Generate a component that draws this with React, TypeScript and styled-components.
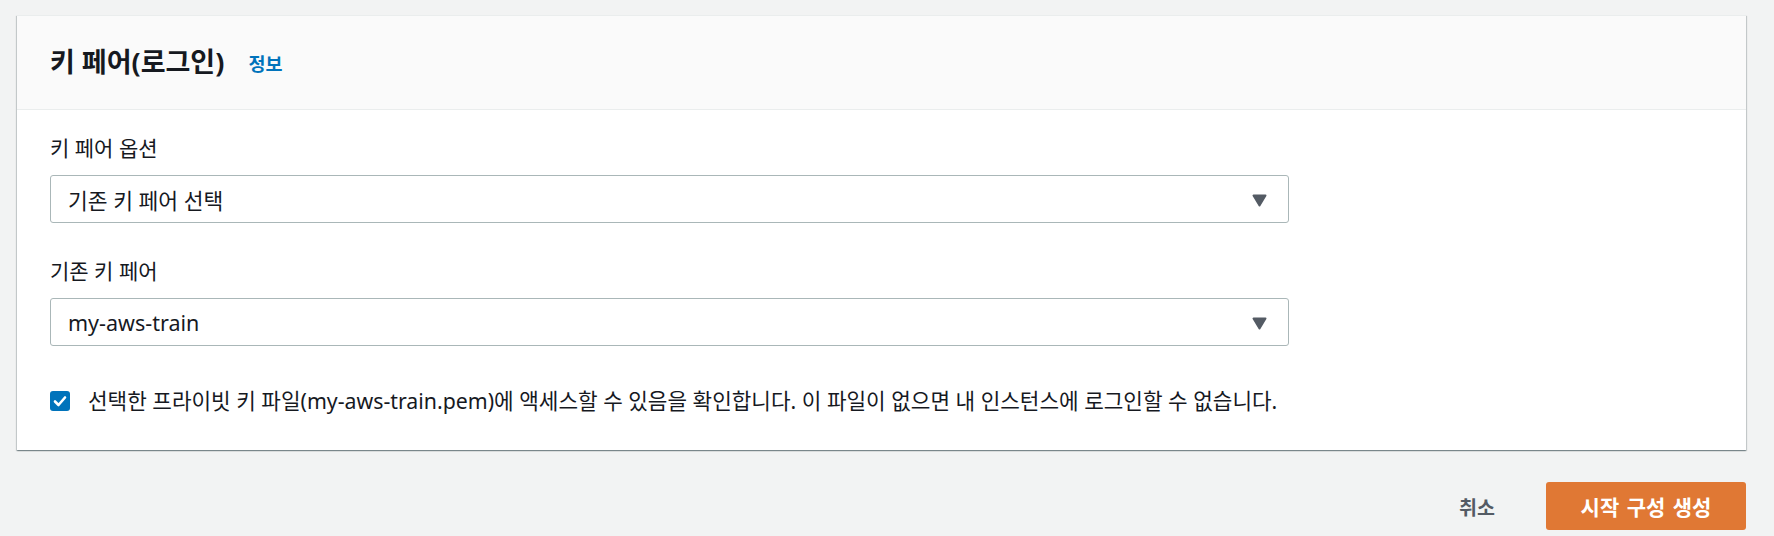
import styled, { createGlobalStyle } from "styled-components";

const GlobalStyle = createGlobalStyle`
  html, body {
    margin: 0;
    padding: 0;
    background: #f2f3f3;
  }
  body {
    font-family: "Noto Sans", "Noto Sans CJK KR", sans-serif;
    color: #16191f;
  }
`;

export default function App() {
  return (
    <Page>
      <GlobalStyle />
      <Card>
        <CardHeader>
          <Title>키 페어(로그인)</Title>
          <InfoLink href="#">정보</InfoLink>
        </CardHeader>
        <CardBody>
          {fields.map((field) => (
            <Field key={field.label}>
              <Label>{field.label}</Label>
              <SelectBox role="button">
                <SelectValue>{field.value}</SelectValue>
                <Caret width="15" height="13" viewBox="0 0 15 13">
                  <path d="M1.5 1.5h12L7.5 11.5z" fill="#545b64" stroke="#545b64" strokeWidth="2" strokeLinejoin="round" />
                </Caret>
              </SelectBox>
            </Field>
          ))}
          <CheckRow>
            <CheckBox>
              <svg width="14" height="12" viewBox="0 0 14 12">
                <path d="M2 6.5l3.5 3.5L12 2.5" fill="none" stroke="#fff" strokeWidth="2.6" strokeLinecap="round" strokeLinejoin="round" />
              </svg>
            </CheckBox>
            <CheckText>
              선택한 프라이빗 키 파일(my-aws-train.pem)에 액세스할 수 있음을 확인합니다. 이 파일이 없으면 내 인스턴스에 로그인할 수 없습니다.
            </CheckText>
          </CheckRow>
        </CardBody>
      </Card>
      <Footer>
        <LinkButton>취소</LinkButton>
        <PrimaryButton>시작 구성 생성</PrimaryButton>
      </Footer>
    </Page>
  );
}

const fields = [
  { label: "키 페어 옵션", value: "기존 키 페어 선택" },
  { label: "기존 키 페어", value: "my-aws-train" },
];

const Page = styled("div")`
  padding: 15px 28px 0 17px;
  min-height: 536px;
  box-sizing: border-box;
`;

const Card = styled("div")`
  background: #fff;
  border-top: 1px solid #eaeded;
  box-shadow: 0 1px 1px 0 rgba(0, 28, 36, 0.3), 1px 1px 1px 0 rgba(0, 28, 36, 0.15),
    -1px 1px 1px 0 rgba(0, 28, 36, 0.15);
`;

const CardHeader = styled("div")`
  height: 94px;
  box-sizing: border-box;
  background: #fafafa;
  border-bottom: 1px solid #eaeded;
  display: flex;
  align-items: center;
  padding: 0 32px 2px 33px;
  column-gap: 24px;
`;

const Title = styled("h2")`
  margin: 0;
  font-size: 27px;
  font-weight: 700;
  line-height: 1.3;
  color: #16191f;
`;

const InfoLink = styled("a")`
  font-size: 18.5px;
  font-weight: 700;
  color: #0073bb;
  text-decoration: none;
  margin-top: 2px;
`;

const CardBody = styled("div")`
  padding: 23px 32px 34px 33px;
  display: flex;
  flex-direction: column;
  row-gap: 33px;
`;

const Field = styled("div")`
  display: flex;
  flex-direction: column;
  row-gap: 12px;
  max-width: 1239px;
`;

const Label = styled("label")`
  font-size: 21px;
  line-height: 30px;
  color: #16191f;
`;

const SelectBox = styled("div")`
  height: 48px;
  box-sizing: border-box;
  border: 1px solid #aab7b8;
  border-radius: 3px;
  background: #fff;
  display: flex;
  align-items: center;
  justify-content: space-between;
  padding: 0 21px 0 17px;
  cursor: pointer;
`;

const SelectValue = styled("span")`
  font-size: 21.5px;
  color: #16191f;
`;

const Caret = styled("svg")`
  display: block;
  margin-top: 2px;
`;

const CheckRow = styled("div")`
  display: flex;
  align-items: center;
  column-gap: 18px;
  margin-top: 7px;
`;

const CheckBox = styled("span")`
  width: 20px;
  height: 20px;
  border-radius: 3px;
  background: #0073bb;
  display: flex;
  align-items: center;
  justify-content: center;
  flex-shrink: 0;
`;

const CheckText = styled("span")`
  font-size: 21.3px;
  line-height: 30px;
  color: #16191f;
`;

const Footer = styled("div")`
  display: flex;
  justify-content: flex-end;
  align-items: center;
  column-gap: 31px;
  padding-top: 32px;
`;

const LinkButton = styled("button")`
  background: transparent;
  border: none;
  font: inherit;
  font-size: 19.5px;
  font-weight: 700;
  color: #545b64;
  padding: 0 20px;
  height: 48px;
  cursor: pointer;
`;

const PrimaryButton = styled("button")`
  width: 200px;
  height: 48px;
  border: none;
  border-radius: 3px;
  background: #e07834;
  color: #fff;
  font: inherit;
  font-size: 21px;
  font-weight: 700;
  word-spacing: 2px;
  cursor: pointer;
`;
